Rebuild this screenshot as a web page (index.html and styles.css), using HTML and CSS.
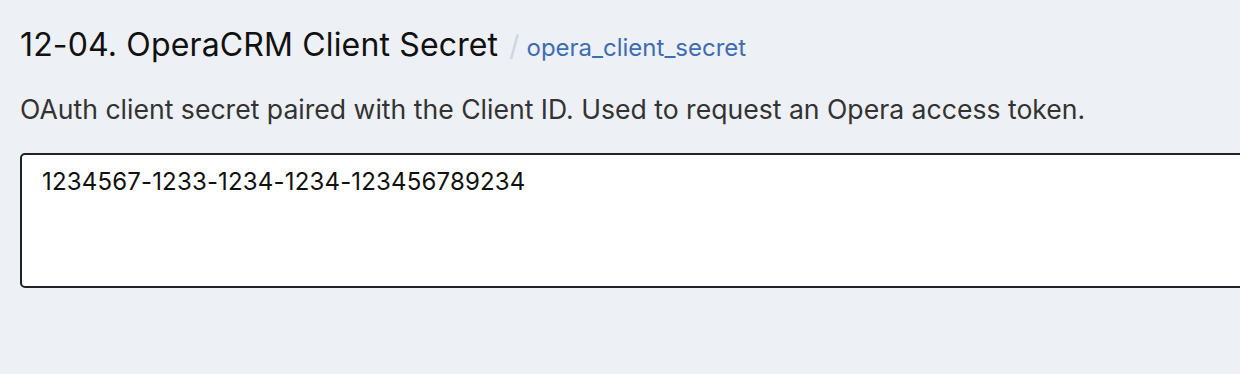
FILE: index.html
```html
<!DOCTYPE html>
<html lang="en">
<head>
<meta charset="utf-8">
<link rel="stylesheet" href="styles.css">
</head>
<body>
<main class="page">
  <section class="field">
    <h2 class="field-title">
      <span class="field-name">12-04. OperaCRM Client Secret</span>
      <span class="sep">/</span>
      <span class="field-key">opera_client_secret</span>
    </h2>
    <p class="field-desc">OAuth client secret paired with the Client ID. Used to request an Opera access token.</p>
    <textarea class="field-input" readonly>1234567-1233-1234-1234-123456789234</textarea>
  </section>
</main>
</body>
</html>
```
FILE: styles.css
```css
html, body {
  margin: 0;
  padding: 0;
  background: #edf0f5;
  overflow: hidden;
}
body {
  font-family: Inter, "Noto Sans", sans-serif;
  color: #1a1a1a;
}
.page {
  padding: 25px 0 0 20px;
  width: 1300px;
}
.field {
  display: flex;
  flex-direction: column;
}
.field-title {
  margin: 0;
  display: flex;
  align-items: baseline;
  font-size: 32px;
  font-weight: 400;
  line-height: 40px;
  letter-spacing: 0.15px;
  color: #111;
}
.sep {
  color: #cfd5de;
  font-size: 28px;
  line-height: 1;
  margin: 0 7px 0 11px;
}
.field-key {
  color: #3d6db3;
  font-size: 24px;
  line-height: 1;
  letter-spacing: 0;
}
.field-desc {
  margin: 28px 0 0 0;
  font-size: 26.6px;
  line-height: 32px;
  color: #333;
}
.field-input {
  display: block;
  margin-top: 28px;
  box-sizing: border-box;
  width: 1260px;
  height: 135px;
  padding: 12px 20px;
  border: 2px solid #222226;
  border-radius: 5px;
  background: #fff;
  font-family: Inter, "Noto Sans", sans-serif;
  font-size: 24px;
  line-height: 30px;
  letter-spacing: 0.17px;
  color: #111;
  resize: none;
  outline: none;
}
```
